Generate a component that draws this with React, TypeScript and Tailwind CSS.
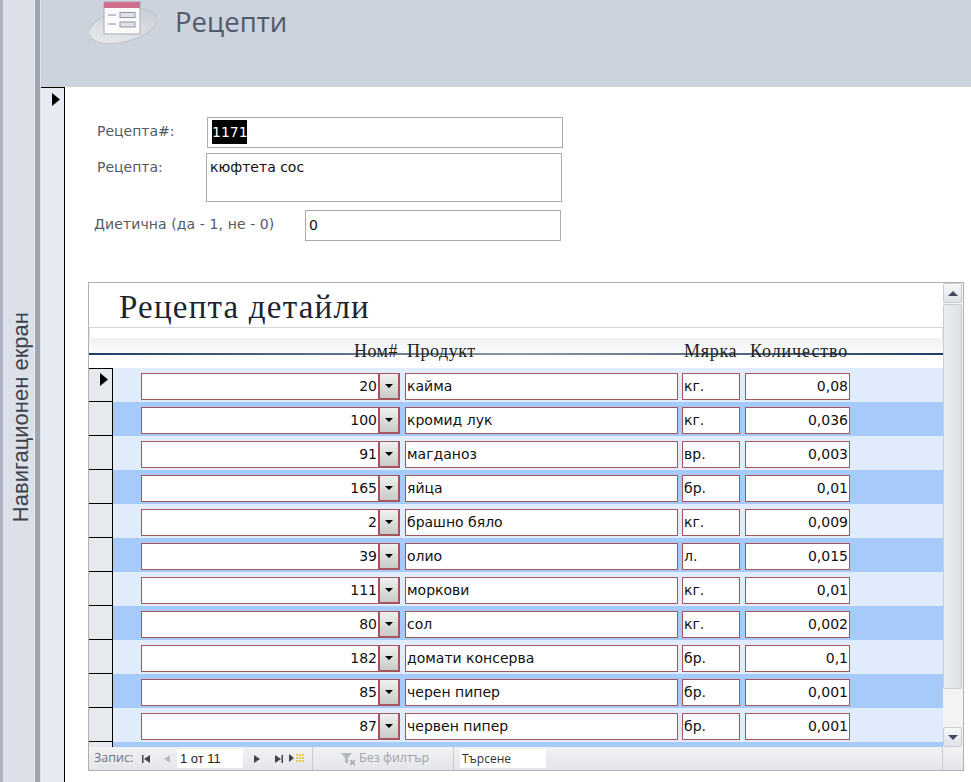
const rows = [
  { id: 20, name: "кайма", unit: "кг.", qty: "0,08" },
  { id: 100, name: "кромид лук", unit: "кг.", qty: "0,036" },
  { id: 91, name: "магданоз", unit: "вр.", qty: "0,003" },
  { id: 165, name: "яйца", unit: "бр.", qty: "0,01" },
  { id: 2, name: "брашно бяло", unit: "кг.", qty: "0,009" },
  { id: 39, name: "олио", unit: "л.", qty: "0,015" },
  { id: 111, name: "моркови", unit: "кг.", qty: "0,01" },
  { id: 80, name: "сол", unit: "кг.", qty: "0,002" },
  { id: 182, name: "домати консерва", unit: "бр.", qty: "0,1" },
  { id: 85, name: "черен пипер", unit: "бр.", qty: "0,001" },
  { id: 87, name: "червен пипер", unit: "бр.", qty: "0,001" },
];

function Arrow({ className }: { className: string }) {
  return (
    <svg viewBox="0 0 8 13" className={className}>
      <path d="M0 0 L8 6.5 L0 13 Z" fill="#000" />
    </svg>
  );
}

function FormIcon() {
  return (
    <svg viewBox="0 0 68 48" className="w-[68px] h-[48px]">
      <defs>
        <linearGradient id="disc" x1="0" y1="1" x2="1" y2="0">
          <stop offset="0" stopColor="#eceef0" />
          <stop offset="1" stopColor="#c3c8d0" />
        </linearGradient>
      </defs>
      <ellipse cx="34" cy="26" rx="35" ry="16" transform="rotate(-14 34 26)" fill="url(#disc)" stroke="#bfc4cc" />
      <rect x="15" y="2" width="36" height="32" fill="#fbfbfc" stroke="#a9adb5" />
      <rect x="15" y="2" width="36" height="6" fill="#cf6f8f" />
      <path d="M19 15h8M19 24h8" stroke="#8a8f98" strokeWidth="1" />
      <rect x="31" y="12.5" width="15" height="5" fill="#dfe3ea" stroke="#8f96a3" />
      <rect x="31" y="22" width="15" height="5" fill="#dfe3ea" stroke="#8f96a3" />
    </svg>
  );
}

function GridRow({ row, index }: { row: (typeof rows)[number]; index: number }) {
  return (
    <div className="flex h-[34px] shrink-0">
      <div className={`w-[24px] shrink-0 bg-[#e6e9ee] border-r border-b border-black flex justify-end pr-[4px] ${index === 0 ? "border-t pt-[4px]" : "pt-[5px]"}`}>
        {index === 0 && <Arrow className="w-[8px] h-[13px]" />}
      </div>
      <div className={`flex-1 flex pt-[5px] pl-[28px] ${index % 2 === 0 ? "bg-[#e0ebfc]" : "bg-[#a6cbfa]"}`}>
        <div className="w-[259px] h-[27px] bg-white border border-[#a8525c] flex items-center justify-end text-[14px] text-[#111]">
          <span className="pr-[1px]">{row.id}</span>
          <div className="w-[21px] h-[25px] border-l-2 border-r border-b border-[#a8525c] bg-gradient-to-b from-[#f1f1f1] to-[#c9c9c9] flex items-center justify-center">
            <div className="w-0 h-0 border-x-[4px] border-x-transparent border-t-[4px] border-t-black" />
          </div>
        </div>
        <div className="w-[273px] h-[27px] ml-[5px] bg-white border border-[#a8525c] flex items-center pl-[1px] text-[14px] text-[#111]">
          {row.name}
        </div>
        <div className="w-[58px] h-[27px] ml-[4px] bg-white border border-[#a8525c] flex items-center pl-[1px] text-[14px] text-[#111]">
          {row.unit}
        </div>
        <div className="w-[105px] h-[27px] ml-[5px] bg-white border border-[#a8525c] flex items-center justify-end pr-[1px] text-[14px] text-[#111]">
          {row.qty}
        </div>
      </div>
    </div>
  );
}

function ScrollButton({ up }: { up?: boolean }) {
  return (
    <div className="w-[19px] h-[20px] shrink-0 bg-gradient-to-b from-[#f6f7f9] to-[#dfe2e7] border border-[#c9ccd2] rounded-[2px] flex items-center justify-center">
      <div
        className={
          up
            ? "w-0 h-0 border-x-[5px] border-x-transparent border-b-[5px] border-b-[#3f4a60]"
            : "w-0 h-0 border-x-[5px] border-x-transparent border-t-[5px] border-t-[#3f4a60]"
        }
      />
    </div>
  );
}

export default function App() {
  return (
    <div className="w-[971px] h-[782px] flex overflow-hidden bg-white font-['DejaVu_Sans',sans-serif]">
      {/* navigation pane */}
      <div className="w-[41px] shrink-0 flex">
        <div className="w-[3px] bg-[#adb4c0]" />
        <div className="w-[31px] bg-[#dce1e9] flex items-center justify-center pt-[52px] pl-[3px]">
          <span className="[writing-mode:vertical-rl] rotate-180 font-['Liberation_Sans',sans-serif] text-[22px] text-[#3d424c] whitespace-nowrap">
            Навигационен екран
          </span>
        </div>
        <div className="w-[1px] bg-[#eef0f4]" />
        <div className="w-[5px] bg-[#a0a6b1]" />
        <div className="w-[1px] bg-[#dfe3ea]" />
      </div>

      <div className="flex-1 flex flex-col">
        <div className="h-[87px] shrink-0 bg-[#cdd3dc] flex items-start pl-[48px]">
          <FormIcon />
          <h1 className="ml-[18px] mt-[2px] font-['Open_Sans',sans-serif] text-[27.5px] leading-[40px] text-[#4f5b6c]">Рецепти</h1>
        </div>

        <div className="flex-1 flex min-h-0">
          <div className="w-[24px] shrink-0 bg-[#e6ebf3] border-t border-r border-black flex justify-end pr-[4px] pt-[5px]">
            <Arrow className="w-[8px] h-[13px]" />
          </div>

          <div className="flex-1 pl-[23px] flex flex-col min-w-0">
            {/* record fields */}
            <div className="h-[195px] shrink-0 pt-[30px] text-[14px] text-[#555a64]">
              <div className="flex h-[31px]">
                <span className="w-[119px] pl-[9px] pt-[4px] leading-[20px]">Рецепта#:</span>
                <div className="w-[356px] border border-[#ababab] pl-[4px] pt-[2px]">
                  <span className="inline-block bg-black text-white leading-[24px] w-[35px]">1171</span>
                </div>
              </div>
              <div className="flex h-[49px] mt-[5px]">
                <span className="w-[118px] pl-[9px] leading-[28px]">Рецепта:</span>
                <div className="w-[356px] border border-[#ababab] pl-[3px] pt-[3px] text-[#111]">кюфтета сос</div>
              </div>
              <div className="flex h-[31px] mt-[8px]">
                <span className="w-[217px] pl-[6px] leading-[28px] tracking-[0.1px]">Диетична (да - 1, не - 0)</span>
                <div className="w-[256px] border border-[#ababab] pl-[3px] flex items-center text-[#111]">0</div>
              </div>
            </div>

            {/* subform */}
            <div className="w-[876px] h-[489px] shrink-0 border border-[#b0b0b0] flex flex-col">
              <div className="flex-1 flex min-h-0">
                <div className="flex-1 flex flex-col min-w-0 overflow-hidden">
                  <div className="h-[44px] shrink-0 pl-[30px] font-['Liberation_Serif',serif] text-[33px] tracking-[1.2px] leading-[48px] text-[#1c2430]">
                    Рецепта детайли
                  </div>
                  <div className="relative h-[41px] shrink-0 border-t border-[#d4d6da] font-['Liberation_Serif',serif] text-[18px] text-[#222]">
                    <div className="h-[10px] border-x border-[#e4e6ea]" />
                    <div className="h-[15px] bg-gradient-to-b from-[#f0f1f3] to-[#fafbfc]" />
                    <div className="absolute left-0 right-0 top-[25px] h-[2px] bg-gradient-to-r from-[#1f3f63] via-[#8c97a4] to-[#1f3f63]" />
                    <div className="absolute inset-x-0 top-[12px] flex leading-[22px] tracking-[0.5px]">
                      <span className="w-[309px] text-right">Ном#</span>
                      <span className="ml-[9px] w-[277px]">Продукт</span>
                      <span className="w-[66px] tracking-[0.7px]">Мярка</span>
                      <span className="tracking-[0.9px]">Количество</span>
                    </div>
                  </div>
                  <div className="flex flex-col">
                    {rows.map((row, i) => (
                      <GridRow key={row.id} row={row} index={i} />
                    ))}
                    <div className="flex h-[6px] shrink-0">
                      <div className="w-[24px] bg-[#e6e9ee] border-r border-black" />
                      <div className="flex-1 bg-[#a6cbfa]" />
                    </div>
                  </div>
                </div>
                <div className="w-[20px] shrink-0 bg-[#f2f3f5] flex flex-col">
                  <ScrollButton up />
                  <div className="w-[19px] h-[385px] mt-[1px] shrink-0 bg-gradient-to-r from-[#eceef1] to-[#dcdfe4] border border-[#c9ccd2] rounded-[2px]" />
                  <div className="flex-1" />
                  <ScrollButton />
                </div>
              </div>

              {/* record navigation */}
              <div className="h-[23px] shrink-0 bg-gradient-to-b from-[#f1f2f4] to-[#e3e5e9] flex items-center font-['Open_Sans',sans-serif] text-[12.5px] text-[#6d7179]">
                <span className="ml-[5px] w-[48px]">Запис:</span>
                <svg viewBox="0 0 8 8" className="w-[8px] h-[8px]"><path d="M0 0h1.5v8H0zM8 0v8L2 4z" fill="#444" /></svg>
                <svg viewBox="0 0 6 8" className="w-[6px] h-[8px] ml-[14px]"><path d="M6 0v8L0 4z" fill="#b9bcc2" /></svg>
                <div className="w-[66px] h-[19px] ml-[7px] bg-white flex items-center pl-[3px] text-[13px] text-[#222] font-['Liberation_Sans',sans-serif]">1 от 11</div>
                <svg viewBox="0 0 6 8" className="w-[6px] h-[8px] ml-[11px]"><path d="M0 0v8l6-4z" fill="#444" /></svg>
                <svg viewBox="0 0 8 8" className="w-[8px] h-[8px] ml-[15px]"><path d="M0 0v8l6-4zM6.5 0H8v8H6.5z" fill="#444" /></svg>
                <svg viewBox="0 0 17 9" className="w-[17px] h-[9px] ml-[6px]">
                  <path d="M0 0v8l5-4z" fill="#444" />
                  <path d="M7 1h9M7 4h9M7 7h9" stroke="#e8c94a" strokeWidth="2" strokeDasharray="2 1" />
                </svg>
                <div className="w-px h-full ml-[6px] bg-[#c8cbd0]" />
                <svg viewBox="0 0 16 14" className="w-[16px] h-[14px] ml-[27px]">
                  <path d="M1 1h11L8 6v6L5 10V6z" fill="#b5b8be" />
                  <path d="M10 8l5 5M15 8l-5 5" stroke="#a3a6ac" strokeWidth="1.5" />
                </svg>
                <span className="ml-[3px] w-[94px] text-[#a1a4aa]">Без филтър</span>
                <div className="w-px h-full bg-[#c8cbd0]" />
                <div className="w-[86px] h-[19px] ml-[6px] bg-white flex items-center pl-[2px] text-[12px] text-[#333]">Търсене</div>
                <div className="flex-1" />
                <div className="w-px h-full bg-[#c8cbd0]" />
                <div className="w-[20px]" />
              </div>
            </div>
          </div>
        </div>
      </div>
    </div>
  );
}
